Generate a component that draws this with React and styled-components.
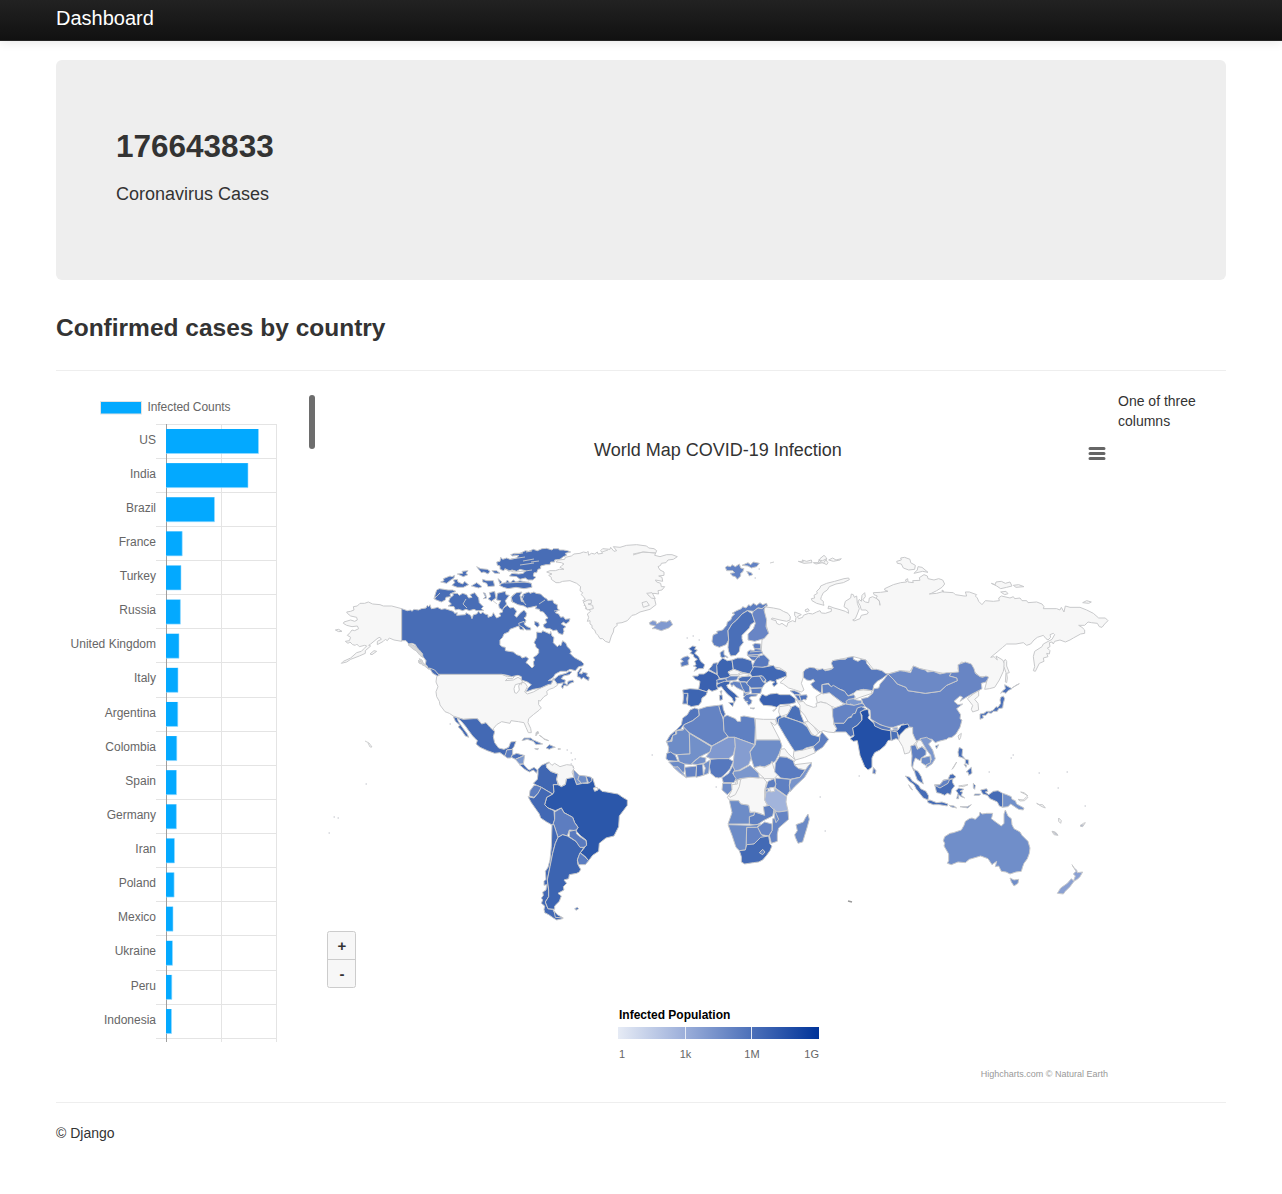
import React from "react";
import styled, { createGlobalStyle } from "styled-components";

const GlobalStyle = createGlobalStyle`
  * { box-sizing: border-box; }
  body {
    margin: 0;
    background: #fff;
    color: #333;
    font: 14px/20px "Helvetica Neue", Helvetica, "Liberation Sans", Arial, sans-serif;
  }
`;

const Navbar = styled.header`
  height: 41px;
  border-bottom: 1px solid #252525;
  background: linear-gradient(#222, #111);
  box-shadow: 0 1px 10px rgba(0, 0, 0, 0.1);
`;
const Container = styled.div`
  width: 1170px;
  margin: 0 auto;
`;
const Brand = styled.div`
  padding-top: 8px;
  font-size: 20px;
  line-height: 20px;
  color: #fff;
`;
const Hero = styled.section`
  height: 220px;
  margin-top: 19px;
  padding: 66px 60px 60px;
  border-radius: 6px;
  background: #eee;
`;
const CaseCount = styled.h2`
  margin: 0 0 13px;
  font-size: 31.5px;
  line-height: 40px;
`;
const HeroText = styled.p`
  margin: 0;
  font-size: 18px;
  line-height: 30px;
`;
const Heading = styled.h3`
  margin: 28px 0 22px;
  font-size: 24.5px;
  line-height: 40px;
`;
const Rule = styled.hr`
  height: 1px;
  margin: 0;
  border: 0;
  background: #eee;
`;
const Columns = styled.main`
  display: flex;
  height: 731px;
  padding-top: 20px;
`;
const ChartScroller = styled.section`
  display: flex;
  width: 262px;
  height: 652px;
  overflow: hidden;
`;
const ScrollThumb = styled.div`
  flex: none;
  width: 6px;
  height: 54px;
  margin-top: 4px;
  border-radius: 3px;
  background: #6d6d6d;
`;
const MapPanel = styled.section`
  width: 800px;
  font-family: "Liberation Sans", Arial, sans-serif;
`;
const SideColumn = styled.aside`
  width: 108px;
`;
const Footer = styled.footer`
  padding: 20px 0 51px;
`;
const Drawing = styled.svg`
  display: block;
  flex: none;
`;
const AxisLabel = styled.text`
  font-size: 12px;
  fill: #666;
`;
const LegendLabel = styled.text`
  font-size: 11px;
  fill: #666;
`;

const bars = [
  ["US", 258.5], ["India", 248], ["Brazil", 214.5], ["France", 182.2],
  ["Turkey", 181], ["Russia", 180.4], ["United Kingdom", 179], ["Italy", 178],
  ["Argentina", 177.8], ["Colombia", 176.8], ["Spain", 176.5], ["Germany", 176.4],
  ["Iran", 174.5], ["Poland", 174.1], ["Mexico", 173], ["Ukraine", 172.5],
  ["Peru", 171.8], ["Indonesia", 171.5],
];

function BarChart() {
  const step = 34.12;
  return (
    <Drawing width="253" height="652" viewBox="56 391 253 652">
      <rect x="100.5" y="401.5" width="41" height="12.5" fill="#03a9ff" stroke="#e3e3e3" />
      <AxisLabel x="147.5" y="411" textLength="83">Infected Counts</AxisLabel>
      <g stroke="#e4e4e4">
        {Array.from({ length: 19 }, (_, i) => (
          <path key={i} d={`M156 ${Math.floor(424.1 + i * step) + 0.5}H277`} />
        ))}
        <path d="M221.5 424V1042M276.5 424V1042" />
      </g>
      <path d="M166.5 424V1042" stroke="#9f9f9f" />
      {bars.map(([name, end], i) => (
        <g key={name}>
          <AxisLabel x="156" y={Math.floor(444.1 + i * step)} textAnchor="end">{name}</AxisLabel>
          <rect x="166" y={429 + i * step} width={end - 166} height="24.5" fill="#03a9ff" />
          <path d={`M${end} ${429 + i * step}v24.5H166`} fill="none" stroke="#9bdcff" strokeWidth=".6" />
        </g>
      ))}
    </Drawing>
  );
}

const none = "#f7f7f7";

/* Each region: origin of its local grid (three units per pixel), then [fill, ...outlines]. */
const regions = [
  { x: 760, y: 540, areas: [
    [none,
      "12,200 40,204 60,208 70,214 84,220 91,230 90,240 80,244 60,240 36,234 34,238 48,242 50,250 58,254 66,250 80,260 84,248 98,242 106,246 108,232 104,226 104,216 120,222 124,224 112,230 116,236 128,232 130,226 146,220 158,222 170,216 180,212 184,219 196,220 214,214 214,206 204,206 206,198 222,204 240,209 256,214 266,220 264,208 252,200 256,184 272,174 274,162 280,164 283,172 290,168 292,190 298,206 292,222 286,236 278,240 282,243 300,236 304,226 322,222 325,216 318,210 304,210 300,196 294,186 298,178 304,184 306,166 314,158 316,170 308,180 316,186 326,188 328,174 338,170 350,176 358,184 360,196 358,182 348,174 352,168 342,164 340,158 362,157 384,154 374,150 374,146 400,134 422,128 440,126 436,120 443,116 444,126 460,128 458,122 480,121 478,113 492,104 502,108 504,116 522,120 536,116 548,120 554,132 546,142 530,152 514,160 508,162 530,160 552,154 546,150 548,156 580,158 586,164 600,166 612,168 620,168 616,156 628,156 650,164 646,168 652,174 656,184 666,194 676,182 700,184 718,182 716,174 724,168 750,174 760,170 764,176 780,174 786,182 800,182 804,188 830,186 846,192 852,200 850,206 890,206 900,210 904,202 912,216 916,198 930,202 960,202 980,210 1000,220 1016,234 1036,234 1044,242 1034,252 1026,262 1018,260 1012,250 994,248 984,246 974,256 956,256 966,262 974,270 974,280 962,282 940,294 930,300 916,306 900,300 884,304 880,312 876,306 868,308 870,320 862,324 870,332 868,342 860,340 864,350 850,354 852,364 838,370 826,394 820,392 824,380 820,350 824,334 846,320 850,312 876,298 884,284 880,280 870,284 872,292 864,300 858,296 850,286 832,292 822,300 812,312 800,316 790,308 768,312 740,312 728,322 714,334 692,352 702,350 712,360 708,348 728,360 734,372 730,394 718,420 704,442 688,446 674,448 684,410 660,410 644,396 628,372 604,366 594,384 596,398 560,402 520,394 480,386 460,378 450,394 420,392 384,402 376,400 340,388 318,360 280,350 218,362 220,384 190,390 150,384 130,396 130,412 124,430 132,450 124,456 100,448 86,444 70,432 60,428 80,410 78,396 60,384 36,380 20,370 28,360 10,346 4,330 6,300 26,280 14,240",
      "736,358 740,364 740,378 748,398 740,400 742,414 740,428 736,426 738,398 732,380 732,364",
      "190,190 192,196 170,190 156,182 154,176 164,174 162,166 172,160 170,154 180,144 182,138 200,130 224,124 252,116 266,114 268,119 250,128 228,132 208,140 202,150 190,158 184,170 182,178 190,184",
      "412,70 410,64 424,60 422,54 434,52 450,58 452,68 466,76 464,88 446,90 430,84 424,72", "462,100 472,90 474,80 486,82 504,97 488,94",
      "694,130 706,134 708,126 724,124 736,130 750,126 756,138 740,142 722,146 710,138", "760,136 776,134 792,140 768,142", "722,156 738,154 744,161 734,164",
      "968,188 980,182 994,186 986,190", "135,210 144,206 148,212 138,216",
      "115,64 130,66 126,60 140,64 154,60 156,68 132,70", "160,68 174,68 180,56 192,46 200,54 198,60 204,68 200,74 188,68 168,72", "176,60 188,62 200,56 190,70", "206,60 218,54 228,60 244,56 240,60 220,64"],
    ["#5678bd", "130,396 136,388 150,382 164,384 172,390 188,386 196,392 208,390 214,388 220,384 214,370 218,362 240,358 256,358 264,352 280,350 280,358 294,364 304,358 318,360 320,370 334,388 350,388 366,392 376,400 384,402 366,416 352,424 342,434 338,452 310,448 300,450 290,454 280,460 264,468 252,452 240,448 210,438 206,430 186,434 184,460 160,444 152,432 164,424 160,418 150,422 140,420 130,412"],
    [none, "168,470 188,458 208,458 226,472 250,490 240,502 226,506 220,500 210,502 200,490 184,486 172,488", "272,468 290,452 310,450 334,452 336,460 306,470 284,478 272,474"],
    ["#5f80c2", "186,434 204,432 214,440 220,436 240,448 254,454 264,468 282,464 286,472 276,478 264,480 272,490 262,494 248,488 226,472 208,458 188,462"],
    ["#7c98ce", "258,484 266,478 280,476 290,480 304,482 306,494 296,492 284,498 272,492 262,496"],
    ["#4a6fb8", "660,522 672,520 680,514 692,514 700,510 708,500 714,502 722,490 720,480 722,472 730,468 734,476 730,490 728,504 716,506 712,514 700,514 694,520 684,518 678,526 668,526 670,534 660,538", "728,452 736,446 734,434 748,442 756,446 744,452 738,460 728,456 722,460", "756,444 766,438 778,431 768,436"],
  ]},
  { x: 320, y: 530, areas: [
    [none,
      "245,236 215,228 190,228 180,224 158,222 145,216 134,220 120,220 112,228 100,230 102,240 92,244 80,246 82,250 92,258 110,262 112,270 104,274 92,270 72,276 70,280 80,286 96,290 112,288 116,296 104,302 96,300 90,308 82,316 92,322 88,332 76,334 84,340 90,336 98,344 106,346 110,342 118,350 134,346 140,348 132,356 124,364 110,368 92,384 70,394 64,400 80,396 92,388 118,378 136,370 136,362 152,348 146,346 152,342 174,324 180,322 184,328 172,334 172,344 190,334 196,328 202,332 208,324 222,330 245,334",
      "150,372 162,362 170,364 156,374", "46,300 56,298 66,304 56,305",
      "354,433 545,433 562,440 584,438 578,446 562,446 556,452 580,450 594,442 604,448 608,458 586,464 582,476 584,488 590,490 598,480 596,468 600,460 604,464 606,456 616,460 622,470 614,486 622,492 640,486 662,474 684,464 694,462 700,446 712,448 712,466 700,474 688,478 680,484 682,494 672,500 660,514 656,510 656,524 664,534 658,540 640,554 626,566 624,578 632,595 634,608 625,608 618,592 612,578 595,575 573,572 570,580 545,575 530,584 520,596 523,605 510,592 498,578 485,582 472,566 460,566 430,568 400,558 388,550 375,545 360,525 358,514 350,500 348,485 354,470 348,456 350,440"],
    ["#486db6",
      "245,236 262,242 272,240 276,244 282,238 296,240 304,236 318,234 322,226 326,230 330,224 334,236 346,234 352,232 364,238 375,236 400,244 404,250 412,248 410,256 436,254 438,248 452,256 456,266 460,254 470,252 476,244 482,252 488,246 494,252 504,254 504,262 516,258 520,248 526,258 530,264 542,258 538,250 548,246 546,238 556,230 562,226 570,234 580,232 590,244 584,256 590,262 600,250 612,240 620,250 618,260 612,264 618,270 616,278 606,284 606,290 612,300 600,298 596,288 586,292 570,298 566,306 552,312 548,322 540,330 540,344 546,350 556,352 556,362 580,366 590,374 602,378 606,384 618,380 626,386 618,398 624,402 636,414 642,408 640,396 644,390 640,382 650,376 656,368 656,358 648,352 646,342 642,338 650,322 650,306 664,308 668,302 690,312 692,304 696,318 702,322 700,338 712,350 718,344 722,348 728,332 738,340 742,350 750,358 754,366 750,370 762,382 784,394 792,402 788,408 776,410 766,422 750,418 740,424 722,424 706,432 700,442 685,452 700,450 716,436 738,430 748,424 756,426 748,434 730,438 724,446 736,450 734,460 742,464 744,454 758,450 762,456 750,460 742,468 732,466 728,476 724,470 730,458 712,462 700,446 694,462 684,464 662,474 640,478 618,486 624,474 634,464 622,456 604,450 604,440 594,436 575,440 562,436 545,433 354,433 344,424 326,416 316,404 318,392 306,376 292,356 286,344 276,340 266,342 258,332 245,332",
      "772,440 772,428 782,414 786,416 778,430 786,432 788,426 802,430 800,438 808,442 806,452 798,448 790,442 784,448 780,442",
      "574,202 580,194 590,188 606,186 600,196 604,214 612,216 604,202 610,192 626,186 630,190 642,186 648,190 662,192 672,202 680,206 684,212 698,210 702,220 712,224 712,234 716,240 706,248 716,252 722,262 730,260 736,268 750,266 748,274 738,282 730,276 724,282 738,290 730,296 732,304 728,314 716,310 710,300 700,302 690,296 680,296 672,292 670,284 680,278 676,268 684,264 670,246 660,244 658,238 646,236 650,228 632,232 622,234 612,228 594,224 574,214",
      "598,286 596,280 612,274 614,284 622,290 632,294 632,300 618,300 612,294", "644,274 656,278 658,286 652,292 644,284",
      "752,66 742,62 730,60 718,60 716,56 700,56 696,60 680,55 666,56 652,62 640,58 626,64 616,62 600,70 584,70 572,74 576,78 596,76 590,84 570,88 560,84 548,88 542,82 540,94 530,96 532,106 540,108 540,118 550,122 558,116 566,124 576,120 590,124 600,118 616,122 610,130 596,132 576,130 568,138 590,140 600,148 616,144 624,150 638,150 648,142 640,138 642,128 650,128 654,118 662,116 662,108 678,104 690,104 692,96 704,96 704,90 720,88 730,80 740,76 736,70",
      "556,158 562,150 570,158 580,150 588,156 600,152 634,160 636,172 612,176 588,172 564,176 550,172 538,166 546,160",
      "390,204 400,196 398,190 412,190 418,196 428,190 440,194 446,204 456,202 450,194 464,188 476,204 478,218 490,230 484,236 492,242 470,242 462,238 448,242 438,238 428,242 416,238 406,240 402,230 384,228 394,222 386,214",
      "350,180 358,176 372,178 384,180 398,180 408,184 390,192 392,200 378,202 376,210 364,216 354,212 344,208 346,200 342,206 346,192",
      "508,188 524,184 528,204 514,214 504,206 512,200", "532,190 556,184 558,194 568,196 556,212 560,222 550,234 548,240 538,234 536,224 542,212 530,210",
      "396,166 404,158 400,150 412,148 414,156 428,162 434,154 440,160 446,164 430,172 412,172", "454,168 470,158 486,170 476,174", "362,156 372,152 370,146 390,138 396,140 404,136 402,144 390,152 380,160", "412,132 428,130 426,124 444,122 438,130 444,134 430,140", "470,110 482,116 502,118 510,124 504,132 492,126 484,128", "516,122 530,122 540,130 524,130", "488,156 488,148 500,152 520,152 524,168 504,170 500,160", "534,146 546,156 540,162", "490,188 496,190 500,204 490,206 496,200",
      "328,414 344,420 358,436 352,438 338,430 332,420"],
    ["#d5d6d8", "264,344 276,344 288,350 298,360 308,372 308,382 300,376 288,362 280,358", "298,386 306,390 310,400 320,406 326,418 314,408 306,404", "296,390 302,402 296,398"],
  ]},
  { x: 500, y: 530, areas: [
    [none, "140,126 150,122 166,122 178,118 192,118 180,112 186,106 192,102 184,98 168,96 176,90 194,88 196,82 214,78 222,72 240,70 250,66 260,68 264,64 266,76 274,70 284,72 292,66 294,72 308,70 302,62 308,56 330,58 332,52 342,64 350,62 340,50 360,52 380,46 410,44 440,48 446,54 462,56 470,62 464,76 480,80 500,74 516,74 532,80 520,88 504,90 498,98 484,100 482,106 474,110 480,120 492,126 492,136 476,138 486,142 488,154 466,150 470,156 482,160 484,170 494,170 486,180 474,182 476,192 462,190 444,194 464,208 468,224 450,238 420,246 406,254 396,256 382,272 366,278 350,280 352,286 342,294 340,306 334,318 328,338 316,334 308,326 300,326 294,316 288,310 284,300 276,294 276,286 270,282 270,272 262,274 266,262 262,252 272,244 266,238 256,236 260,228 252,226 260,218 248,212 256,208 250,200 244,194 248,188 240,182 242,170 230,160 210,152 188,154 178,158 168,158 154,148 154,142 146,136 156,132", "426,218 440,214 448,226 430,232", "440,190 456,188 466,206 454,204", "250,216 264,210 274,210 274,220 264,222 278,226 280,236 262,240"],
    ["#8099cf", "448,278 458,272 468,274 470,282 484,274 500,276 510,270 518,284 506,294 484,302 466,296 456,296 466,288 450,284"],
  ]},
  { x: 400, y: 690, areas: [
    ["#4369b4", "160,80 190,88 220,86 232,86 245,102 258,98 270,112 284,125 280,140 284,158 296,174 312,178 326,172 332,156 348,154 342,170 336,178 322,180 320,190 314,198 300,188 284,190 262,182 240,172 228,162 232,152 226,146 218,138 206,122 196,108 184,94 172,84 174,92 180,102 190,116 202,132 206,142 196,138 184,120 174,110 180,106 166,94"],
    ["#5a7cc0", "314,198 318,188 320,180 338,178 338,192 332,204 322,204"],
    ["#4c71b9", "336,196 350,190 372,196 360,202 346,208 334,202"],
    ["#7c98cd", "346,208 360,202 374,196 370,222 358,222"],
    ["#466cb6", "358,224 370,222 382,236 388,240 402,232 412,240 410,250 400,240 388,246 374,238"],
    ["#4f74ba", "366,152 372,144 392,144 400,150 414,156 428,162 408,164 400,154 382,148", "438,174 448,164 466,172 456,174 448,178", "404,176 416,176 412,179"],
    ["#bfc3cb", "408,138 408,128 414,124 416,130 408,134", "418,136 426,140 432,148 446,152 432,146", "474,176 482,177 474,178"],
    ["#3f66b2", "414,238 424,226 442,218 448,216 440,232 452,244 474,252 470,268 474,284 460,284 462,306 458,312 444,304 424,292 410,286 400,280 412,268 414,252"],
    [none, "440,232 438,224 448,218 456,226 464,220 480,230 500,224 518,226 522,236 516,246 522,262 498,268 498,280 484,290 476,284 470,268 474,252 452,244"],
    ["#7a96cc", "520,238 538,256 534,268 544,280 530,284 522,264"], ["#6d8cc6", "538,256 558,258 562,278 544,280 534,268"],
    ["#2b57aa", "460,284 474,284 484,290 496,284 500,266 522,262 530,284 548,280 564,280 578,264 586,290 584,300 598,296 606,304 620,306 642,310 654,312 668,322 682,330 682,346 670,362 658,378 656,410 642,438 618,444 598,460 596,484 578,496 566,512 554,498 540,488 550,478 560,462 558,450 540,436 528,422 534,412 524,398 518,382 492,368 484,354 466,362 444,354 434,344 440,322 458,312 462,306"],
    ["#4c70b8", "558,258 574,262 576,272 566,280"], [none, "580,294 592,292 594,300 584,304"],
    ["#5c7dc0", "402,286 410,286 424,292 424,300 414,310 402,322 388,318 390,302"],
    ["#4268b4", "424,292 444,304 458,312 440,322 434,344 444,354 462,362 464,390 458,406 440,396 422,384 418,372 408,358 394,338 384,320 402,324 414,310"],
    ["#5d7dc0", "464,366 484,354 492,368 518,382 524,398 534,412 528,422 508,420 502,438 488,434 474,442 468,424 460,400 464,388"],
    ["#4369b4", "456,404 462,404 470,430 474,442 466,460 458,490 450,530 442,570 446,600 446,620 436,636 444,656 458,658 466,672 488,686 470,690 460,684 446,674 434,668 432,658 434,648 424,640 428,630 424,624 430,616 428,606 438,600 440,584 432,586 432,574 438,568 436,544 444,532 450,510 454,470"],
    ["#3c64b1", "474,442 488,434 502,438 508,442 528,454 540,470 552,472 540,490 532,510 534,524 542,538 538,546 530,550 508,554 506,566 492,570 500,580 490,590 492,600 474,610 484,618 478,634 464,648 464,658 444,656 436,636 446,620 446,600 442,570 450,530 458,490 466,460", "462,662 472,674 490,684 466,682"],
    ["#597abf", "508,424 528,420 530,432 540,440 558,452 560,466 552,472 540,472 528,454 508,440"],
    ["#5b7dc1", "540,488 554,500 566,512 556,524 536,524 532,510"],
    ["#4a70b8", "524,656 532,652 536,656 528,661"],
  ]},
  { x: 640, y: 540, areas: [
    ["#6282c4", "256,82 262,78 272,80 276,74 286,80 298,72 302,84 312,86 308,96 302,100 302,108 292,118 286,110 278,108 270,100 284,98 278,92 260,92", "306,76 324,68 332,74 340,66 358,70 350,80 334,84 324,78", "320,94 334,98 338,104 328,108"],
    ["#5c7dc0", "218,290 220,284 232,280 230,274 248,270 260,256 262,246 272,240 276,230 284,222 276,220 290,212 304,206 308,200 318,204 326,194 332,198 340,190 350,196 360,188 368,194 380,190 382,198 366,206 354,204 340,214 322,212 306,222 290,240 276,252 264,272 266,300 258,314 238,322 222,316 216,304"],
    ["#4a6fb8", "322,212 338,222 344,246 332,254 328,264 306,286 306,296 310,308 300,320 298,334 288,346 272,348 266,334 264,322 266,300 264,272 276,252 290,240 306,222"],
    ["#6885c5", "340,214 354,204 366,206 378,196 372,210 380,240 378,260 386,280 372,296 344,304 324,300 324,282 340,266 346,250 336,222"],
    ["#4f74ba", "240,338 252,330 252,344 262,350 264,354 256,350 248,354 242,350"],
    ["#3c64b1", "146,326 158,318 168,320 164,328 172,330 164,340 176,350 182,364 194,374 190,386 176,386 162,394 170,382 160,378 168,374 164,364 172,358 162,352 160,344 150,340 156,334"],
    ["#5779be", "122,368 130,364 122,358 130,352 142,348 150,354 144,362 146,374 124,380"],
    ["#3a61b0", "158,408 174,408 176,402 192,402 206,392 232,404 238,414 230,430 234,448 216,454 206,448 200,456 176,448 180,424 166,418"],
    ["#3d65b2", "128,450 150,446 176,448 202,456 198,466 186,474 184,486 176,496 154,500 142,494 144,464 130,462"],
    ["#4b70b8", "130,460 144,460 140,476 142,492 128,492 130,476"],
    ["#4a70b8", "206,388 214,380 220,370 232,368 232,390 230,402 220,396"],
    ["#3c64b1", "230,376 238,364 248,354 262,362 276,360 280,388 264,396 274,412 240,416 232,404"],
    ["#466cb6", "276,360 292,354 308,354 334,362 340,386 328,402 314,398 300,396 280,388"],
    [none, "264,396 282,388 304,396 292,404 272,404", "296,404 312,400 328,402 324,408 298,412"],
    ["#5f80c2", "256,416 272,408 296,408 290,420 262,424"], ["#486eb7", "230,420 256,416 262,424 246,430 232,430"],
    ["#4a6fb7", "294,416 306,410 332,408 334,414 320,426 300,426"],
    ["#3c64b1", "230,434 242,428 254,424 270,424 268,432 260,436 264,444 276,454 284,460 296,472 286,472 288,480 282,488 276,474 262,462 250,448 244,440 232,444", "266,488 282,488 278,500", "238,466 246,464 248,478 240,482", "240,454 246,452 244,462"],
    ["#6483c4", "270,430 282,424 300,426 316,426 326,436 330,448 326,460 316,464 316,456 304,450 288,442 280,434 276,440"],
    ["#567abf", "300,426 316,426 328,438 330,456 316,458 308,446"], ["#6d8cc6", "312,456 320,462 316,474 310,466"],
    ["#5275bc", "322,426 336,410 360,408 368,424 376,430 366,444 334,444 320,432"],
    ["#5a7bc0", "332,446 366,444 362,460 336,462"],
    ["#5a7cc0", "310,474 318,464 328,462 352,462 350,468 332,470 328,474 336,482 334,490 326,496 320,488 324,484 316,484", "330,504 344,504 340,507"],
    ["#5d7dc1", "338,314 346,310 362,312 362,326 344,328", "322,336 330,330 342,332 346,326 362,328 368,340 354,344 322,346", "322,346 354,344 356,350 346,362 336,360"],
    ["#5879be", "338,376 346,360 356,348 372,344 388,360 384,378 360,384 340,382"],
    ["#4168b4", "338,386 342,380 370,382 400,376 408,386 424,390 438,396 440,408 420,416 408,420 412,432 402,440 396,432 404,426 390,422 376,430 378,420 366,408 358,408 336,410 330,400"],
    ["#5f80c2", "358,408 368,408 378,420 370,426"],
    ["#3a61b0", "358,478 366,462 378,468 390,462 410,460 420,464 450,464 466,476 466,488 450,492 420,494 410,502 396,498 370,496 360,484"],
    ["#5275bc", "450,452 464,452 478,458 482,464 464,464", "464,464 478,466 484,484 474,480", "478,466 500,464 502,470 498,480 490,478 484,484"],
    [none, "398,512 404,508 410,504 402,514"],
  ]},
  { x: 650, y: 690, areas: [
    [none, "388,50 416,46 424,50 414,72 392,80 386,66", "316,86 340,88 376,88 380,102 374,106 362,96 390,150 318,150", "480,94 506,130 516,120 496,138 486,132 464,96", "432,182 460,180 490,172 496,188 464,202 436,210 430,198"],
    ["#4a70b8", "378,84 390,76 398,82 386,104 380,96", "416,68 426,50 436,46 450,56 452,72 460,92 464,100 444,94 422,86 408,80"],
    ["#5177bd", "386,86 402,80 420,86 444,94 458,100 472,112 484,134 506,140 512,136 508,154 492,168 468,174 458,180 434,184 422,166 406,140 392,116 384,102"],
    ["#5c7dc0", "510,136 516,126 536,148 524,164 518,172 496,186 490,170 508,154"],
    ["#5275bc", "120,60 134,54 146,58 148,76 128,92 100,106 92,118 78,122 76,134 68,138 62,152 48,156 60,136 78,120 94,104 98,84 112,74"],
    ["#6483c3", "146,58 170,50 204,46 216,48 214,70 220,90 222,120 234,140 186,168 118,128 100,112 102,104 128,92 148,76"],
    ["#4a6fb8", "206,46 218,44 220,58 226,72 220,84 212,68"],
    ["#5f80c2", "220,90 222,80 232,76 256,86 262,94 272,94 272,80 282,78 314,84 316,112 314,164 254,142 236,142 222,124"],
    [none, "66,154 62,152 70,136 76,134 78,122 100,118 100,124 80,126 78,136 70,140"],
    ["#6d8cc7", "50,156 66,154 68,136 80,132 80,122 100,120 102,112 118,130 120,192 82,194 54,188 56,172"],
    ["#7290c9", "118,130 184,170 180,186 166,192 150,200 134,212 124,224 104,222 88,216 82,194 120,192"],
    ["#8099cf", "186,168 236,142 254,142 256,170 250,194 236,206 204,208 182,206 168,200 180,186"],
    ["#859dd0", "254,142 314,164 300,184 304,204 296,224 268,240 252,244 248,232 252,196 256,170"],
    ["#6e8dc8", "318,150 390,150 396,168 388,190 376,214 362,222 344,230 312,232 304,206 300,186 316,164"],
    [none, "312,234 330,228 344,232 362,222 366,214 372,236 384,254 372,266 344,266 326,250", "392,178 404,176 414,190 436,210 432,216 410,202 388,200", "434,224 484,218 466,240 440,234"],
    ["#597bc0", "388,200 410,202 430,212 434,226 446,236 466,240 450,262 420,268 392,264 374,246 376,220"],
    ["#7894cb", "484,218 484,228 464,262 434,290 420,306 418,286 424,268 450,262 466,240 476,226"],
    ["#5f80c2", "376,264 420,268 418,286 420,302 410,318 396,308 376,294"],
    ["#5c7dc0", "354,274 372,266 378,282 374,292 362,294 346,298"],
    [none, "248,300 262,266 272,270 276,264 300,262 340,264 350,276 344,300 344,330 352,346 344,352 346,378 330,370 300,366 296,346 272,342 266,332 238,330 232,322", "236,318 244,304 246,284 262,282 262,270 272,268 268,290 256,314 240,322"],
    ["#7290c9", "346,300 354,294 354,304 346,312"],
    ["#a2b4db", "348,306 358,304 376,296 410,320 408,336 414,362 384,366 358,354 344,330"], [none, "358,294 372,292 374,304 362,306"],
    ["#7b97cd", "250,244 270,242 300,226 326,250 328,264 300,262 270,266 250,274"],
    ["#5c7dc0", "216,264 236,250 248,228 254,240 248,250 258,266 252,278 220,278"], ["#5678be", "182,208 204,206 236,206 250,214 240,236 228,250 214,262 206,264 196,262 182,250 178,230"],
    ["#6d8cc7", "218,280 244,280 246,300 232,314 216,300"],
    ["#597bc0", "50,190 62,186 76,196 84,214 56,212 48,206"], ["#6b8ac6", "56,216 84,214 104,222 104,240 100,252 86,236 70,230"], ["#8ca3d4", "70,232 84,230 100,250 110,264 88,248"],
    ["#6483c4", "104,232 140,228 138,260 108,262"], ["#7491ca", "124,222 150,200 168,204 166,218 142,224"], ["#5577be", "140,224 158,222 160,256 138,262"], ["#7290c9", "160,222 180,210 176,250 160,256 166,234"],
    ["#6d8cc7", "238,332 266,332 272,342 296,346 300,368 314,366 312,376 300,380 298,402 234,402 246,368"],
    ["#5e7fc1", "298,380 312,376 314,366 344,376 340,350 358,346 372,360 368,378 340,392 320,406 298,402"],
    ["#6584c4", "368,386 378,382 376,364 386,366 414,362 416,388 386,414 382,432 382,454 364,460 358,436 366,422 368,396"], ["#6d8cc7", "372,356 380,374 386,388 378,398 374,384"],
    ["#6483c4", "322,412 344,396 366,402 366,422 356,438 334,434", "288,462 290,412 322,410 334,434 344,440 312,462 290,468"],
    ["#6d8cc7", "234,404 300,406 332,402 320,412 290,412 288,480 268,482 258,472 246,436"],
    ["#436ab5", "268,482 286,480 290,464 312,462 332,442 356,438 360,462 366,468 360,482 350,496 338,510 326,516 310,518 284,522 274,516 274,500"],
    ["#6b8ac6", "328,488 338,478 345,486 338,494", "474,372 478,388 472,410 458,456 444,460 436,442 434,434 442,422 438,404 460,396 466,384"],
  ]},
  { x: 780, y: 640, areas: [
    [none, "48,178 56,186 70,184 78,194 100,202 110,200 108,190 122,186 140,190 156,200 158,220 166,240 160,252 170,266 164,278 144,276 130,272 120,276 104,262 84,244 74,226 60,210 60,196"],
    ["#6483c4", "158,206 174,200 196,192 222,196 246,190 256,198 232,208 224,224 204,234 192,250 162,250 158,228"],
    ["#4c71b9", "162,250 192,250 204,234 214,232 218,222 226,220 232,204 244,200 258,206 242,216 246,240 232,256 218,264 224,284 212,290 206,286 198,276 164,276 170,266"],
    ["#6885c4", "324,102 342,120 352,132 378,142 384,152 436,160 480,154 500,136 532,122 530,114 508,108 512,98 536,96 534,74 556,66 574,72 582,86 586,100 600,110 608,112 618,108 626,112 618,126 604,130 606,146 596,152 572,164 552,176 540,184 548,172 540,168 522,184 534,194 548,192 530,206 542,224 540,236 546,240 540,262 528,282 516,292 504,294 500,298 476,304 466,308 456,298 440,296 424,298 408,304 400,292 394,262 384,262 370,252 340,262 318,262 284,246 272,236 270,210 256,200 248,188 244,176 264,172 278,160 282,146 296,144 300,132 314,116"],
    ["#6c89c6", "324,102 340,98 360,92 374,94 392,98 400,78 410,82 420,86 436,90 442,96 460,94 480,102 500,98 514,98 508,108 530,114 532,122 500,136 480,154 436,160 384,152 378,142 352,132 342,120"],
    ["#2350a7", "240,216 252,210 264,208 268,226 264,234 282,250 310,262 334,270 354,270 364,256 384,252 388,262 376,268 364,284 358,292 352,278 332,272 334,300 324,302 316,316 300,330 284,338 276,354 276,382 264,390 254,380 240,346 232,302 220,304 210,296 222,288 218,264 232,256 246,240 246,226"],
    ["#5678bd", "280,242 300,254 332,264 330,272 306,268 284,258"], ["#93a8d6", "338,264 352,262 354,270 342,270"],
    ["#4a70b8", "332,272 352,276 354,290 358,300 348,296 334,302"],
    ["#5879be", "280,382 288,392 286,402 278,400"],
    [none, "388,262 398,262 398,280 404,294 410,304 400,316 394,322 388,338 374,342 368,320 356,300 360,284 376,268", "408,312 416,300 432,304 440,316 440,330 428,320 414,326", "562,176 580,162 596,152 596,168 584,178 594,190 596,210 578,216 574,208 578,196", "534,288 544,280 542,292 538,300"],
    ["#5f80c2", "392,318 406,314 412,328 426,320 438,332 438,344 424,354 420,362 406,354 400,370 398,382 410,396 402,394 394,376 396,348"],
    ["#7c97cd", "420,296 440,292 456,302 446,312 458,330 466,356 456,372 438,384 440,372 454,360 452,346 440,330"],
    ["#6d8cc7", "424,354 450,348 452,368 436,376 424,368"],
    ["#4a70b8", "402,388 414,394 424,410 430,432 412,420 406,404", "466,318 476,314 470,326"],
  ]},
  { x: 890, y: 720, areas: [
    ["#708ec9", "164,350 180,340 190,338 214,330 222,316 226,304 238,296 246,294 256,298 268,286 270,276 276,282 290,280 308,280 306,290 304,296 320,308 334,318 342,310 342,282 346,270 354,288 364,296 366,314 372,326 390,336 396,346 414,364 420,384 418,400 412,416 402,430 398,440 394,454 378,456 360,462 348,456 334,454 326,438 316,440 320,424 306,434 294,416 272,408 238,418 226,428 204,426 184,434 172,430 176,422 176,402 162,378 164,370 160,362", "360,474 372,480 386,478 384,490 372,498 364,486"],
    ["#8aa0d2", "546,434 552,444 560,450 562,458 578,456 570,470 562,478 550,484 556,468 550,462 558,454", "544,476 552,484 540,500 526,514 520,522 502,520 512,504 532,490"],
    ["#466cb6", "46,168 60,172 66,182 86,196 92,206 108,214 116,228 114,240 100,234 78,206 72,194 58,184", "112,242 120,240 140,248 156,246 174,252 172,258 148,254 130,254 114,248", "134,194 150,194 160,180 174,178 180,164 188,162 198,170 188,178 188,188 194,198 186,208 182,224 172,220 164,226 150,220 140,218", "200,236 204,220 198,212 206,204 222,208 210,214 218,216 214,226 224,234 214,230 206,224 206,236", "272,210 290,206 294,214 286,216 296,224 310,214 324,212 338,220 338,262 328,258 322,246 300,236 292,226 278,222", "178,256 192,258 200,264 182,260", "210,260 232,260 244,254 234,264", "250,190 256,196 254,208 250,204", "254,222 272,222 268,226 252,226", "204,96 208,82 218,88 216,106 226,118 214,112 206,110", "228,156 244,142 246,160 236,166 234,156", "226,118 236,120 236,134 226,130", "222,132 230,136 228,142"],
    ["#7290c9", "338,220 350,224 364,230 366,238 376,242 380,252 402,264 400,270 386,268 362,252 354,260 338,262"],
    [none, "384,238 400,240 410,230 414,232 404,242 390,243", "392,216 402,218 414,228 404,222", "186,148 200,126 190,144", "440,250 448,254 458,254 466,264 456,260", "506,294 514,302 512,310 506,304", "486,334 496,336 504,346 492,344", "570,318 580,310 586,308 578,320", "206,198 218,196 234,194 220,200", "56,194 68,210 62,206"],
    ["#6282c3", "134,196 150,204 160,198 174,190 178,180 188,176 174,178 160,182 150,194"],
    ["#8ca3d4", "488,334 504,344 498,344", "570,316 580,314 576,320"],
  ]},
];

const specks = [
  [329, 833], [334, 817], [338, 818], [366, 784], [450, 724], [652, 755], [567, 750], [571, 753], [572, 760], [571, 764], [575, 759], [573, 767], [693, 636], [687, 638],
  [699, 640], [716, 787], [820, 797], [825, 831], [859, 776], [989, 772], [1011, 758], [1013, 755], [1039, 773], [1067, 772], [1058, 788], [1085, 806], [755, 578], [759, 569],
];

function InfectionMap() {
  return (
    <Drawing width="800" height="690" viewBox="318 391 800 690">
      <defs>
        <linearGradient id="scale">
          <stop offset="0" stopColor="#e6ebf5" />
          <stop offset=".33" stopColor="#9cafda" />
          <stop offset=".667" stopColor="#4c70b9" />
          <stop offset="1" stopColor="#003399" />
        </linearGradient>
      </defs>
      <text x="718" y="456" textAnchor="middle" fontSize="18" fill="#333">World Map COVID-19 Infection</text>
      <path d="M1090 448.5H1104M1090 453.5H1104M1090 458.5H1104" stroke="#666" strokeWidth="3" strokeLinecap="round" />
      {regions.map((region) => (
        <g key={`${region.x}-${region.y}`} transform={`translate(${region.x} ${region.y}) scale(.33333)`} stroke="#c8c9cb" strokeWidth="3" strokeLinejoin="round">
          {region.areas.flatMap(([fill, ...outlines], i) =>
            outlines.map((points, j) => <polygon key={`${i}-${j}`} points={points} fill={fill} />)
          )}
        </g>
      ))}
      <g fill="none" stroke="#c8c9cb" strokeWidth=".9">
        <path d="M365 741l4 2 3 4-2 0-2-4M750 652l12-1M749 656l11 1M818 563l3-1M770 563l4-1" />
        <path d="M523 561l11-2M511 559l14-2M531 562l8-1M525 571l7-1M515 594l-4 3 2 6M524 595l-2 5 4 5M492 600l5 4M440 593l-6 6M466 599l-3 5 4 4M514 554l9-1M526 552l6-1M520 565l14-2M504 569l10 3 12-1M505 583l24-1M545 600l-6 4M560 610l-6 1" />
        <path d="M633 555l10-3 13 1M633 554l10-2 12 1M602 552l6-2" />
        <path d="M848 901l4 1" stroke="#999" strokeWidth="1.6" />
      </g>
      <g fill="#bfc2c9">{specks.map(([x, y]) => <rect key={`${x}-${y}`} x={x - 0.5} y={y - 0.5} width="1.5" height="1" />)}</g>
      <rect x="327.5" y="931.5" width="28" height="56" rx="2" fill="#f7f7f7" stroke="#ccc" />
      <path d="M327.5 959.5h28" stroke="#ccc" />
      <g fontSize="15" fontWeight="bold" fill="#333" textAnchor="middle">
        <text x="342" y="951">+</text>
        <text x="342" y="979">-</text>
      </g>
      <text x="619" y="1019" fontSize="12" fontWeight="bold" fill="#000">Infected Population</text>
      <rect x="618" y="1027" width="201" height="12" fill="url(#scale)" />
      <path d="M685.5 1027v12M751.5 1027v12" stroke="#e6ebf5" />
      <LegendLabel x="619" y="1058">1</LegendLabel>
      <LegendLabel x="685.5" y="1058" textAnchor="middle">1k</LegendLabel>
      <LegendLabel x="752" y="1058" textAnchor="middle">1M</LegendLabel>
      <LegendLabel x="819" y="1058" textAnchor="end">1G</LegendLabel>
      <text x="1108" y="1077" textAnchor="end" fontSize="9" fill="#999">Highcharts.com © Natural Earth</text>
    </Drawing>
  );
}

export default function App() {
  return (
    <>
      <GlobalStyle />
      <Navbar>
        <Container>
          <Brand>Dashboard</Brand>
        </Container>
      </Navbar>
      <Container>
        <Hero>
          <CaseCount>176643833</CaseCount>
          <HeroText>Coronavirus Cases</HeroText>
        </Hero>
        <Heading>Confirmed cases by country</Heading>
        <Rule />
        <Columns>
          <ChartScroller>
            <BarChart />
            <ScrollThumb />
          </ChartScroller>
          <MapPanel>
            <InfectionMap />
          </MapPanel>
          <SideColumn>One of three columns</SideColumn>
        </Columns>
        <Rule />
        <Footer>© Django</Footer>
      </Container>
    </>
  );
}
